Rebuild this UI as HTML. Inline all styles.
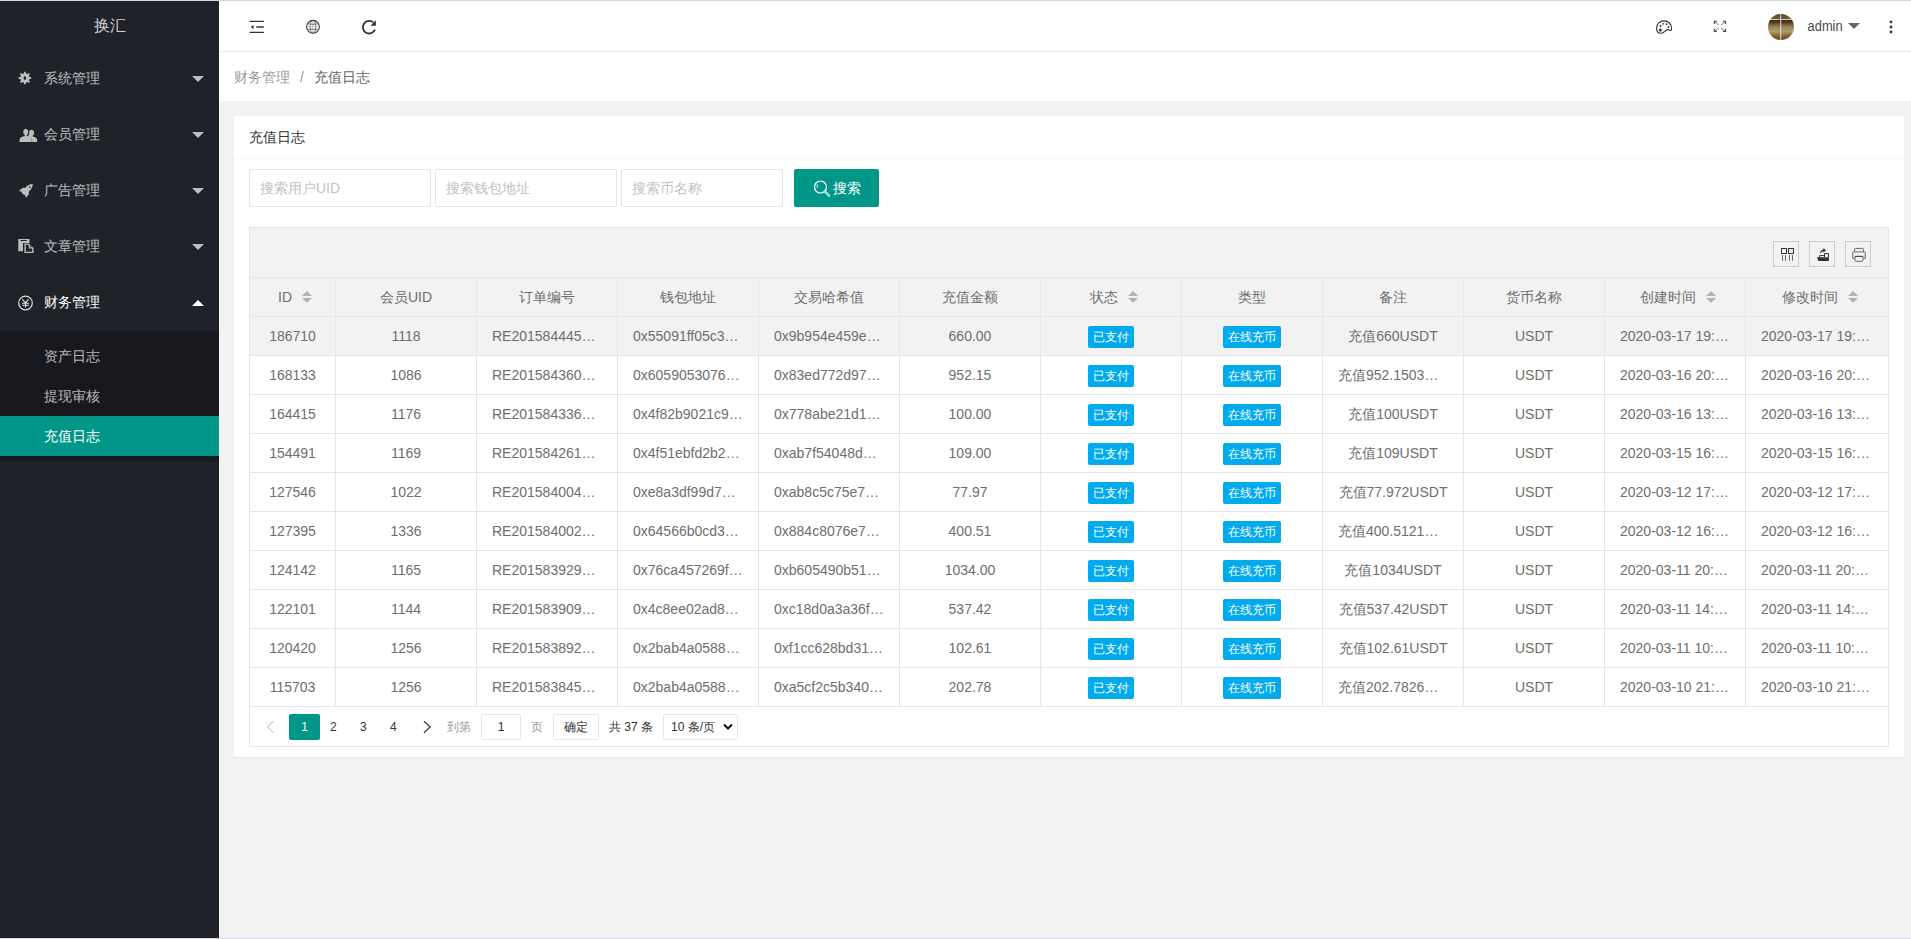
<!DOCTYPE html>
<html><head><meta charset="utf-8">
<style>
*{margin:0;padding:0;box-sizing:border-box}
html,body{width:1911px;height:939px;overflow:hidden;background:#f2f2f2;font-family:"Liberation Sans",sans-serif;font-size:14px;color:#666}
i{font-style:normal}
#topline{position:absolute;left:0;top:0;width:1911px;height:1px;background:#d6d7d9;z-index:50}
#botline{position:absolute;left:0;top:938px;width:1911px;height:1px;background:#d9d8e0;z-index:50}
#side{position:absolute;left:0;top:0;width:219px;height:939px;background:#20222a}
#logo{position:absolute;left:0;top:0;width:219px;height:50px;line-height:52px;text-align:center;color:rgba(255,255,255,.8);font-size:16px;box-shadow:0 1px 2px 0 rgba(0,0,0,.15)}
.nav{position:absolute;left:0;width:219px;height:56px;line-height:56px;color:rgba(255,255,255,.7)}
.nav svg{position:absolute}
.nav .tx{position:absolute;left:44px;top:0}
.nav .car{position:absolute;left:192px;top:26px;width:0;height:0;border-left:6px solid transparent;border-right:6px solid transparent;border-top:6px solid rgba(255,255,255,.7)}
.nav .car.up{border-top:0;border-bottom:6px solid #fff}
#child{position:absolute;left:0;top:331px;width:219px;height:130px;background:#18191e}
.sub{position:absolute;left:0;width:219px;height:40px;line-height:40px;padding-left:44px;color:rgba(255,255,255,.7)}
.sub.on{background:#009688;color:#fff}
#header{position:absolute;left:219px;top:0;width:1692px;height:52px;background:#fff;border-bottom:1px solid #ebebeb;box-shadow:0 1px 0 #fafafa;z-index:5}
#header svg{position:absolute}
#crumb{position:absolute;left:219px;top:52px;width:1692px;height:49px;background:#fff;line-height:51px;padding-left:15px;color:#999}
#card{position:absolute;left:234px;top:116px;width:1670px;height:641px;background:#fff;border-radius:2px;box-shadow:0 1px 2px 0 rgba(0,0,0,.05)}
#cardh{position:absolute;left:0;top:0;width:1670px;height:43px;line-height:42px;padding-left:15px;color:#333;border-bottom:1px solid #f6f6f6}
.inp{position:absolute;top:169px;height:38px;border:1px solid #e6e6e6;border-radius:2px;line-height:36px;padding-left:10px;color:#c2c2c2}
#btn{position:absolute;left:794px;top:169px;width:85px;height:38px;background:#009688;border-radius:2px;color:#fff;line-height:38px}
#tbl{position:absolute;left:249px;top:227px;width:1640px;height:520px;border:1px solid #e6e6e6;background:#fff}
#tool{position:absolute;left:250px;top:228px;width:1638px;height:89px;background:#f2f2f2}
.tbtn{position:absolute;top:241px;width:26px;height:26px;border:1px solid #ccc}
.tbtn svg{position:absolute;left:-1px;top:-1px}
.vl{position:absolute;top:277px;width:1px;height:430px;background:#e6e6e6;z-index:3}
.hl{position:absolute;left:250px;width:1638px;height:1px;background:#e6e6e6;z-index:3}
.th,.td{position:absolute;height:38px;line-height:38px;text-align:center;white-space:nowrap;overflow:hidden;padding:0 15px;color:#6e6e6e;z-index:2}
.th{top:278px}
.sort{display:inline-block;position:relative;width:10px;height:20px;margin-left:5px;vertical-align:middle}
.sort i{position:absolute;left:5px;width:0;height:0;border-left:5px solid transparent;border-right:5px solid transparent}
.sort .asc{top:3px;border-bottom:5px solid #b2b2b2}
.sort .desc{bottom:5px;border-top:5px solid #b2b2b2}
.rowbg{position:absolute;left:250px;width:1638px;height:38px;background:#f2f2f2;z-index:1}
.badge{display:inline-block;height:22px;line-height:22px;padding:0 5px;font-size:12px;color:#fff;background:#01aaed;border-radius:2px;vertical-align:middle}
#page{position:absolute;left:250px;top:707px;width:1638px;height:39px;font-size:12px;color:#333}
#page > *{position:absolute}
</style></head><body>
<div id="topline"></div>
<div id="side">
  <div id="logo">换汇</div>
  <div class="nav" style="top:50px"><svg width="219" height="56" style="left:0;top:0" viewBox="0 50 219 56"><g fill="rgba(255,255,255,.7)"><path d="M23.9 71.8h2v1.7l1.5.6 1.2-1.2 1.4 1.4-1.2 1.2.6 1.5h1.7v2h-1.7l-.6 1.5 1.2 1.2-1.4 1.4-1.2-1.2-1.5.6v1.7h-2v-1.7l-1.5-.6-1.2 1.2-1.4-1.4 1.2-1.2-.6-1.5h-1.7v-2h1.7l.6-1.5-1.2-1.2 1.4-1.4 1.2 1.2 1.5-.6z M24.9 76.2a1.3 1.8 0 1 0 0.01 0z" fill-rule="evenodd"/></g></svg><span class="tx">系统管理</span><i class="car"></i></div>
  <div class="nav" style="top:106px"><svg width="219" height="56" style="left:0;top:0" viewBox="0 106 219 56"><g fill="rgba(255,255,255,.7)"><path d="M26 128.8c-1.7 0-2.7 1.3-2.7 3.2 0 1.3.6 2.5 1.5 3.1v.9c-2.6.6-5.2 1.7-5.2 3.5v2.5h12.2v-2.5c0-1.7-2.5-2.9-5-3.5v-.9c.9-.6 1.5-1.8 1.5-3.1 0-1.9-1-3.2-2.7-3.2z"/><path d="M31.5 129.8c-1.2 0-2.1.9-2.3 2.2.1.9.1 1.8-.3 2.7-.3.6-.6 1-1 1.3v.6c2.4.6 4.2 1.9 4.2 3.4V142h5v-2.4c0-1.4-2-2.6-4.3-3.1v-.8c.8-.5 1.3-1.6 1.3-2.7 0-1.7-.9-3.2-2.6-3.2z"/></g></svg><span class="tx">会员管理</span><i class="car"></i></div>
  <div class="nav" style="top:162px"><svg width="219" height="56" style="left:0;top:0" viewBox="0 162 219 56"><g fill="rgba(255,255,255,.7)"><path d="M33 183.8c-3.3.2-6 1.6-7.9 4.2l-2.4-.3-3.9 3.2 3.2.8-.5.8 2.8 2.8.8-.5.8 3.2 3.1-3.9-.3-2.4c2.6-1.9 4-4.6 4.2-7.9z M29.7 186.4a.8.8 0 1 0 .01 0z" fill-rule="evenodd"/></g></svg><span class="tx">广告管理</span><i class="car"></i></div>
  <div class="nav" style="top:218px"><svg width="219" height="56" style="left:0;top:0" viewBox="0 218 219 56"><g fill="rgba(255,255,255,.7)"><path d="M18.3 238.9h11.2v4.1h-1.5l-.1-.1h-4.9v8.3h-4.7z"/><path d="M24.4 243.4h4.3l4.9 4.6v5.1h-9.2z M25.8 244.8v7h6.4v-3.4h-3.5v-3.6z M30 245.3v1.9h2z" fill-rule="evenodd"/><rect x="20.5" y="240.1" width="6.4" height=".8" fill="#20222a" rx=".4"/></g></svg><span class="tx">文章管理</span><i class="car"></i></div>
  <div class="nav" style="top:274px;color:#fff"><svg width="219" height="56" style="left:0;top:0" viewBox="0 274 219 56"><g fill="none" stroke="rgba(255,255,255,.85)"><circle cx="25.5" cy="303" r="6.8" stroke-width="1.2"/><path d="M22.4 299.3l3.1 3.6 3.1-3.6 M22.1 303.2h6.8 M22.1 305.2h6.8 M25.5 302.9v4.7" stroke-width="1.1"/></g></svg><span class="tx">财务管理</span><i class="car up"></i></div>
  <div id="child">
    <div class="sub" style="top:5px">资产日志</div>
    <div class="sub" style="top:45px">提现审核</div>
    <div class="sub on" style="top:85px">充值日志</div>
  </div>
</div>
<div id="header">
<svg style="left:0;top:0" width="200" height="51" viewBox="219 0 200 51">
 <g fill="#333">
  <rect x="249.5" y="20.7" width="14.5" height="1.4" rx=".6"/>
  <rect x="256.2" y="26.2" width="7.8" height="1.5" rx=".6"/>
  <rect x="249.5" y="31.7" width="14.5" height="1.4" rx=".6"/>
  <path d="M250.6 26.95 L253.5 24.9 L253.5 29 Z"/>
 </g>
 <g fill="none">
  <circle cx="313" cy="26.8" r="6.4" stroke="#3a3a3a" stroke-width="1.1"/>
  <ellipse cx="313" cy="26.8" rx="2.9" ry="6.4" stroke="#555" stroke-width=".8"/>
  <line x1="313" y1="20.8" x2="313" y2="32.8" stroke="#999" stroke-width=".7"/>
  <path d="M308.2 23.8 Q313 25 317.8 23.8" stroke="#555" stroke-width=".8"/>
  <path d="M308.2 29.6 Q313 28.6 317.8 29.6" stroke="#555" stroke-width=".8"/>
  <line x1="306.8" y1="26.8" x2="319.2" y2="26.8" stroke="#aaa" stroke-width=".6"/>
 </g>
 <g>
  <path d="M373.2 22.3 A6.3 6.3 0 1 0 375 29.6" fill="none" stroke="#333" stroke-width="1.8"/>
  <path d="M375.9 20.2 L375.9 25.7 L370.4 25.7 Z" fill="#333"/>
 </g>
</svg>
<svg style="left:1420px;top:0" width="272" height="51" viewBox="1639 0 272 51">
 <g fill="none" stroke="#333" stroke-width="1.1">
  <path d="M1664 20.9 C1660 20.9 1656.6 24 1656.6 28.2 C1656.6 31.4 1658.6 33.2 1661 33.2 C1663.4 33.2 1664.4 31.8 1665.4 30.8 C1666.6 29.6 1668 29.3 1669.4 30.1 C1670.6 30.8 1671.6 30.4 1671.6 28.4 C1671.6 24 1668.2 20.9 1664 20.9 Z"/>
 </g>
 <g fill="#333">
  <circle cx="1660.3" cy="29.9" r="1.5"/>
  <circle cx="1660.5" cy="26" r="0.9"/>
  <circle cx="1663" cy="23.8" r="0.9"/>
  <circle cx="1666.5" cy="24.2" r="0.9"/>
  <circle cx="1668.4" cy="27" r="0.9"/>
 </g>
 <g fill="none" stroke="#444" stroke-width="1.1">
  <path d="M1714.3 24 V21.3 H1717"/>
  <path d="M1725.5 24 V21.3 H1722.8"/>
  <path d="M1714.3 28.8 V31.5 H1717"/>
  <path d="M1725.5 28.8 V31.5 H1722.8"/>
 </g>
 <g fill="none" stroke="#777" stroke-width="1">
  <path d="M1714.6 21.6 L1718.8 25"/>
  <path d="M1725.2 21.6 L1721 25"/>
  <path d="M1714.6 31.2 L1718.8 27.8"/>
  <path d="M1725.2 31.2 L1721 27.8"/>
 </g>
 <defs>
  <clipPath id="av"><circle cx="1781" cy="27" r="13"/></clipPath>
  <linearGradient id="avg" x1="0" y1="0" x2="0" y2="1">
   <stop offset="0" stop-color="#5a3a18"/>
   <stop offset=".15" stop-color="#7a5a30"/>
   <stop offset=".24" stop-color="#3a220e"/>
   <stop offset=".36" stop-color="#6a4a24"/>
   <stop offset=".5" stop-color="#9a8458"/>
   <stop offset=".68" stop-color="#aa9c6c"/>
   <stop offset=".82" stop-color="#8a6a3a"/>
   <stop offset="1" stop-color="#6a4418"/>
  </linearGradient>
 </defs>
 <g clip-path="url(#av)">
  <rect x="1768" y="14" width="26" height="26" fill="url(#avg)"/>
  <rect x="1780.2" y="14" width="1" height="26" fill="#d6e2e6"/>
  <rect x="1768" y="19" width="26" height="1" fill="#cadde4"/>
  <g fill="#9fd0e6"><circle cx="1780.7" cy="19.5" r="1"/><circle cx="1774.6" cy="19.5" r=".8"/><circle cx="1786.4" cy="19.5" r=".8"/><circle cx="1780.7" cy="25" r=".8"/><circle cx="1780.7" cy="30.5" r=".8"/><circle cx="1780.7" cy="35.5" r=".8"/></g>
 </g>
 <text x="1807.6" y="30.5" font-family="Liberation Sans" font-size="14" fill="#4a4a4a" textLength="35" lengthAdjust="spacingAndGlyphs">admin</text>
 <path d="M1848 23 L1860 23 L1854 29 Z" fill="#666"/>
 <g fill="#333">
  <rect x="1889.7" y="20.7" width="2.5" height="2.5"/>
  <rect x="1889.7" y="25.7" width="2.5" height="2.5"/>
  <rect x="1889.7" y="30.7" width="2.5" height="2.5"/>
 </g>
</svg>
</div>
<div id="crumb"><span style="position:relative;top:0px">财务管理</span><span style="margin:0 10px">/</span><span style="color:#666;position:relative;top:0px">充值日志</span></div>
<div id="card">
  <div id="cardh">充值日志</div>
</div>
<div class="inp" style="left:249px;width:182px">搜索用户UID</div>
<div class="inp" style="left:435px;width:182px">搜索钱包地址</div>
<div class="inp" style="left:621px;width:162px">搜索币名称</div>
<div id="btn"><svg style="position:absolute;left:0;top:0" width="85" height="38" viewBox="794 169 85 38"><g fill="none" stroke="#fff"><circle cx="820.5" cy="187" r="6" stroke-width="1.2"/><path d="M817.8 184.2a3.2 3.2 0 0 0 -.4 3.6" stroke-width=".9"/><path d="M824.8 191.4l4.4 4.4" stroke-width="2.2" stroke-linecap="round"/><path d="M824.8 191.4l4.4 4.4" stroke="#009688" stroke-width=".8" stroke-linecap="round"/></g></svg><span style="position:absolute;left:39px;top:0">搜索</span></div>
<div id="tbl"></div>
<div id="tool"></div>
<div class="tbtn" style="left:1773px"><svg width="26" height="26" viewBox="1773 241 26 26"><g fill="none" stroke="#333" stroke-width="1"><rect x="1781.5" y="248.5" width="5" height="5"/><rect x="1788.5" y="248.5" width="5" height="5"/></g><g fill="#666"><rect x="1782" y="255.1" width="1" height="5.7"/><rect x="1785" y="255.1" width="1" height="5.7"/><rect x="1789" y="255.1" width="1" height="5.7"/><rect x="1792" y="255.1" width="1" height="5.7"/></g></svg></div>
<div class="tbtn" style="left:1809px"><svg width="26" height="26" viewBox="1809 241 26 26"><g fill="#333"><path d="M1817 257.2 L1828.9 257.2 L1828.9 260.9 L1818.3 260.9 Z"/><path d="M1825.9 250.3 L1823.4 247.9 L1823.4 249.4 C1821.2 249.8 1819.9 251.4 1820.2 253.8 C1820.8 252.4 1821.8 251.5 1823.4 251.2 L1823.4 252.7 Z"/></g><g fill="none" stroke="#333" stroke-width="1"><path d="M1824.5 257 V253.6 H1828.5 V257.5"/><path d="M1819.5 257.5 V255.6 H1824.5"/></g></svg></div>
<div class="tbtn" style="left:1845px"><svg width="26" height="26" viewBox="1845 241 26 26"><g fill="none" stroke="#666" stroke-width="1"><path d="M1854.5 251.8 V249.3 C1854.5 248.7 1854.9 248.4 1855.4 248.4 H1862.6 C1863.1 248.4 1863.5 248.8 1863.5 249.3 V251.8"/><path d="M1854.4 258.3 H1852.7 V252.6 C1852.7 252.2 1853 251.9 1853.4 251.9 H1864.6 C1865 251.9 1865.3 252.2 1865.3 252.6 V258.3 H1863.6"/><path d="M1855 256.4 H1863 V260.6 C1863 261 1862.7 261.3 1862.3 261.3 H1855.7 C1855.3 261.3 1855 261 1855 260.6 Z"/></g><path d="M1855 256.4 H1863" stroke="#444" stroke-width="1"/></svg></div>
<i class="vl" style="left:335px"></i>
<i class="vl" style="left:476px"></i>
<i class="vl" style="left:617px"></i>
<i class="vl" style="left:758px"></i>
<i class="vl" style="left:899px"></i>
<i class="vl" style="left:1040px"></i>
<i class="vl" style="left:1181px"></i>
<i class="vl" style="left:1322px"></i>
<i class="vl" style="left:1463px"></i>
<i class="vl" style="left:1604px"></i>
<i class="vl" style="left:1745px"></i>
<i class="hl" style="top:277px"></i>
<i class="hl" style="top:316px"></i>
<i class="hl" style="top:355px"></i>
<i class="hl" style="top:394px"></i>
<i class="hl" style="top:433px"></i>
<i class="hl" style="top:472px"></i>
<i class="hl" style="top:511px"></i>
<i class="hl" style="top:550px"></i>
<i class="hl" style="top:589px"></i>
<i class="hl" style="top:628px"></i>
<i class="hl" style="top:667px"></i>
<i class="hl" style="top:706px"></i>
<div class="th" style="left:250px;width:85px"><span>ID</span><span class="sort"><i class="asc"></i><i class="desc"></i></span></div>
<div class="th" style="left:336px;width:140px"><span>会员UID</span></div>
<div class="th" style="left:477px;width:140px"><span>订单编号</span></div>
<div class="th" style="left:618px;width:140px"><span>钱包地址</span></div>
<div class="th" style="left:759px;width:140px"><span>交易哈希值</span></div>
<div class="th" style="left:900px;width:140px"><span>充值金额</span></div>
<div class="th" style="left:1041px;width:140px"><span>状态</span><span class="sort"><i class="asc"></i><i class="desc"></i></span></div>
<div class="th" style="left:1182px;width:140px"><span>类型</span></div>
<div class="th" style="left:1323px;width:140px"><span>备注</span></div>
<div class="th" style="left:1464px;width:140px"><span>货币名称</span></div>
<div class="th" style="left:1605px;width:140px"><span>创建时间</span><span class="sort"><i class="asc"></i><i class="desc"></i></span></div>
<div class="th" style="left:1746px;width:142px"><span>修改时间</span><span class="sort"><i class="asc"></i><i class="desc"></i></span></div>
<div class="rowbg" style="top:317px"></div>
<div class="td" style="left:250px;top:317px;width:85px">186710</div>
<div class="td" style="left:336px;top:317px;width:140px">1118</div>
<div class="td" style="left:477px;top:317px;width:140px;text-align:left">RE201584445…</div>
<div class="td" style="left:618px;top:317px;width:140px;text-align:left">0x55091ff05c3…</div>
<div class="td" style="left:759px;top:317px;width:140px;text-align:left">0x9b954e459e…</div>
<div class="td" style="left:900px;top:317px;width:140px">660.00</div>
<div class="td" style="left:1041px;top:317px;width:140px"><span class="badge">已支付</span></div>
<div class="td" style="left:1182px;top:317px;width:140px"><span class="badge">在线充币</span></div>
<div class="td" style="left:1323px;top:317px;width:140px">充值660USDT</div>
<div class="td" style="left:1464px;top:317px;width:140px">USDT</div>
<div class="td" style="left:1605px;top:317px;width:140px;text-align:left">2020-03-17 19:…</div>
<div class="td" style="left:1746px;top:317px;width:142px;text-align:left">2020-03-17 19:…</div>
<div class="td" style="left:250px;top:356px;width:85px">168133</div>
<div class="td" style="left:336px;top:356px;width:140px">1086</div>
<div class="td" style="left:477px;top:356px;width:140px;text-align:left">RE201584360…</div>
<div class="td" style="left:618px;top:356px;width:140px;text-align:left">0x6059053076…</div>
<div class="td" style="left:759px;top:356px;width:140px;text-align:left">0x83ed772d97…</div>
<div class="td" style="left:900px;top:356px;width:140px">952.15</div>
<div class="td" style="left:1041px;top:356px;width:140px"><span class="badge">已支付</span></div>
<div class="td" style="left:1182px;top:356px;width:140px"><span class="badge">在线充币</span></div>
<div class="td" style="left:1323px;top:356px;width:140px;text-align:left">充值952.1503…</div>
<div class="td" style="left:1464px;top:356px;width:140px">USDT</div>
<div class="td" style="left:1605px;top:356px;width:140px;text-align:left">2020-03-16 20:…</div>
<div class="td" style="left:1746px;top:356px;width:142px;text-align:left">2020-03-16 20:…</div>
<div class="td" style="left:250px;top:395px;width:85px">164415</div>
<div class="td" style="left:336px;top:395px;width:140px">1176</div>
<div class="td" style="left:477px;top:395px;width:140px;text-align:left">RE201584336…</div>
<div class="td" style="left:618px;top:395px;width:140px;text-align:left">0x4f82b9021c9…</div>
<div class="td" style="left:759px;top:395px;width:140px;text-align:left">0x778abe21d1…</div>
<div class="td" style="left:900px;top:395px;width:140px">100.00</div>
<div class="td" style="left:1041px;top:395px;width:140px"><span class="badge">已支付</span></div>
<div class="td" style="left:1182px;top:395px;width:140px"><span class="badge">在线充币</span></div>
<div class="td" style="left:1323px;top:395px;width:140px">充值100USDT</div>
<div class="td" style="left:1464px;top:395px;width:140px">USDT</div>
<div class="td" style="left:1605px;top:395px;width:140px;text-align:left">2020-03-16 13:…</div>
<div class="td" style="left:1746px;top:395px;width:142px;text-align:left">2020-03-16 13:…</div>
<div class="td" style="left:250px;top:434px;width:85px">154491</div>
<div class="td" style="left:336px;top:434px;width:140px">1169</div>
<div class="td" style="left:477px;top:434px;width:140px;text-align:left">RE201584261…</div>
<div class="td" style="left:618px;top:434px;width:140px;text-align:left">0x4f51ebfd2b2…</div>
<div class="td" style="left:759px;top:434px;width:140px;text-align:left">0xab7f54048d…</div>
<div class="td" style="left:900px;top:434px;width:140px">109.00</div>
<div class="td" style="left:1041px;top:434px;width:140px"><span class="badge">已支付</span></div>
<div class="td" style="left:1182px;top:434px;width:140px"><span class="badge">在线充币</span></div>
<div class="td" style="left:1323px;top:434px;width:140px">充值109USDT</div>
<div class="td" style="left:1464px;top:434px;width:140px">USDT</div>
<div class="td" style="left:1605px;top:434px;width:140px;text-align:left">2020-03-15 16:…</div>
<div class="td" style="left:1746px;top:434px;width:142px;text-align:left">2020-03-15 16:…</div>
<div class="td" style="left:250px;top:473px;width:85px">127546</div>
<div class="td" style="left:336px;top:473px;width:140px">1022</div>
<div class="td" style="left:477px;top:473px;width:140px;text-align:left">RE201584004…</div>
<div class="td" style="left:618px;top:473px;width:140px;text-align:left">0xe8a3df99d7…</div>
<div class="td" style="left:759px;top:473px;width:140px;text-align:left">0xab8c5c75e7…</div>
<div class="td" style="left:900px;top:473px;width:140px">77.97</div>
<div class="td" style="left:1041px;top:473px;width:140px"><span class="badge">已支付</span></div>
<div class="td" style="left:1182px;top:473px;width:140px"><span class="badge">在线充币</span></div>
<div class="td" style="left:1323px;top:473px;width:140px">充值77.972USDT</div>
<div class="td" style="left:1464px;top:473px;width:140px">USDT</div>
<div class="td" style="left:1605px;top:473px;width:140px;text-align:left">2020-03-12 17:…</div>
<div class="td" style="left:1746px;top:473px;width:142px;text-align:left">2020-03-12 17:…</div>
<div class="td" style="left:250px;top:512px;width:85px">127395</div>
<div class="td" style="left:336px;top:512px;width:140px">1336</div>
<div class="td" style="left:477px;top:512px;width:140px;text-align:left">RE201584002…</div>
<div class="td" style="left:618px;top:512px;width:140px;text-align:left">0x64566b0cd3…</div>
<div class="td" style="left:759px;top:512px;width:140px;text-align:left">0x884c8076e7…</div>
<div class="td" style="left:900px;top:512px;width:140px">400.51</div>
<div class="td" style="left:1041px;top:512px;width:140px"><span class="badge">已支付</span></div>
<div class="td" style="left:1182px;top:512px;width:140px"><span class="badge">在线充币</span></div>
<div class="td" style="left:1323px;top:512px;width:140px;text-align:left">充值400.5121…</div>
<div class="td" style="left:1464px;top:512px;width:140px">USDT</div>
<div class="td" style="left:1605px;top:512px;width:140px;text-align:left">2020-03-12 16:…</div>
<div class="td" style="left:1746px;top:512px;width:142px;text-align:left">2020-03-12 16:…</div>
<div class="td" style="left:250px;top:551px;width:85px">124142</div>
<div class="td" style="left:336px;top:551px;width:140px">1165</div>
<div class="td" style="left:477px;top:551px;width:140px;text-align:left">RE201583929…</div>
<div class="td" style="left:618px;top:551px;width:140px;text-align:left">0x76ca457269f…</div>
<div class="td" style="left:759px;top:551px;width:140px;text-align:left">0xb605490b51…</div>
<div class="td" style="left:900px;top:551px;width:140px">1034.00</div>
<div class="td" style="left:1041px;top:551px;width:140px"><span class="badge">已支付</span></div>
<div class="td" style="left:1182px;top:551px;width:140px"><span class="badge">在线充币</span></div>
<div class="td" style="left:1323px;top:551px;width:140px">充值1034USDT</div>
<div class="td" style="left:1464px;top:551px;width:140px">USDT</div>
<div class="td" style="left:1605px;top:551px;width:140px;text-align:left">2020-03-11 20:…</div>
<div class="td" style="left:1746px;top:551px;width:142px;text-align:left">2020-03-11 20:…</div>
<div class="td" style="left:250px;top:590px;width:85px">122101</div>
<div class="td" style="left:336px;top:590px;width:140px">1144</div>
<div class="td" style="left:477px;top:590px;width:140px;text-align:left">RE201583909…</div>
<div class="td" style="left:618px;top:590px;width:140px;text-align:left">0x4c8ee02ad8…</div>
<div class="td" style="left:759px;top:590px;width:140px;text-align:left">0xc18d0a3a36f…</div>
<div class="td" style="left:900px;top:590px;width:140px">537.42</div>
<div class="td" style="left:1041px;top:590px;width:140px"><span class="badge">已支付</span></div>
<div class="td" style="left:1182px;top:590px;width:140px"><span class="badge">在线充币</span></div>
<div class="td" style="left:1323px;top:590px;width:140px">充值537.42USDT</div>
<div class="td" style="left:1464px;top:590px;width:140px">USDT</div>
<div class="td" style="left:1605px;top:590px;width:140px;text-align:left">2020-03-11 14:…</div>
<div class="td" style="left:1746px;top:590px;width:142px;text-align:left">2020-03-11 14:…</div>
<div class="td" style="left:250px;top:629px;width:85px">120420</div>
<div class="td" style="left:336px;top:629px;width:140px">1256</div>
<div class="td" style="left:477px;top:629px;width:140px;text-align:left">RE201583892…</div>
<div class="td" style="left:618px;top:629px;width:140px;text-align:left">0x2bab4a0588…</div>
<div class="td" style="left:759px;top:629px;width:140px;text-align:left">0xf1cc628bd31…</div>
<div class="td" style="left:900px;top:629px;width:140px">102.61</div>
<div class="td" style="left:1041px;top:629px;width:140px"><span class="badge">已支付</span></div>
<div class="td" style="left:1182px;top:629px;width:140px"><span class="badge">在线充币</span></div>
<div class="td" style="left:1323px;top:629px;width:140px">充值102.61USDT</div>
<div class="td" style="left:1464px;top:629px;width:140px">USDT</div>
<div class="td" style="left:1605px;top:629px;width:140px;text-align:left">2020-03-11 10:…</div>
<div class="td" style="left:1746px;top:629px;width:142px;text-align:left">2020-03-11 10:…</div>
<div class="td" style="left:250px;top:668px;width:85px">115703</div>
<div class="td" style="left:336px;top:668px;width:140px">1256</div>
<div class="td" style="left:477px;top:668px;width:140px;text-align:left">RE201583845…</div>
<div class="td" style="left:618px;top:668px;width:140px;text-align:left">0x2bab4a0588…</div>
<div class="td" style="left:759px;top:668px;width:140px;text-align:left">0xa5cf2c5b340…</div>
<div class="td" style="left:900px;top:668px;width:140px">202.78</div>
<div class="td" style="left:1041px;top:668px;width:140px"><span class="badge">已支付</span></div>
<div class="td" style="left:1182px;top:668px;width:140px"><span class="badge">在线充币</span></div>
<div class="td" style="left:1323px;top:668px;width:140px;text-align:left">充值202.7826…</div>
<div class="td" style="left:1464px;top:668px;width:140px">USDT</div>
<div class="td" style="left:1605px;top:668px;width:140px;text-align:left">2020-03-10 21:…</div>
<div class="td" style="left:1746px;top:668px;width:142px;text-align:left">2020-03-10 21:…</div>
<div id="page">
<svg style="left:0;top:0" width="200" height="39" viewBox="250 707 200 39"><path d="M273.5 721.2 L267.3 727 L273.5 732.8" fill="none" stroke="#d2d2d2" stroke-width="1.2"/><path d="M424 721.2 L430.2 727 L424 732.8" fill="none" stroke="#333" stroke-width="1.2"/></svg>
<span style="left:39px;top:7px;width:31px;height:26px;line-height:26px;background:#009688;color:#fff;border-radius:2px;text-align:center">1</span>
<span style="left:80px;top:7px;line-height:26px">2</span>
<span style="left:110px;top:7px;line-height:26px">3</span>
<span style="left:140px;top:7px;line-height:26px">4</span>
<span style="left:197px;top:7px;line-height:26px;color:#999">到第</span>
<span style="left:231px;top:7px;width:40px;height:26px;line-height:24px;border:1px solid #e6e6e6;border-radius:2px;text-align:center">1</span>
<span style="left:281px;top:7px;line-height:26px;color:#999">页</span>
<span style="left:303px;top:7px;width:46px;height:26px;line-height:24px;border:1px solid #e6e6e6;border-radius:2px;text-align:center">确定</span>
<span style="left:359px;top:7px;line-height:26px">共 37 条</span>
<span style="left:413px;top:7px;width:75px;height:26px;line-height:24px;border:1px solid #e6e6e6;border-radius:2px;padding-left:7px">10 条/页<svg style="position:absolute;left:59px;top:8px" width="10" height="8" viewBox="0 0 10 8"><path d="M1 1.5 L5 5.5 L9 1.5" fill="none" stroke="#111" stroke-width="2"/></svg></span>
</div>
<div id="botline"></div>
</body></html>
